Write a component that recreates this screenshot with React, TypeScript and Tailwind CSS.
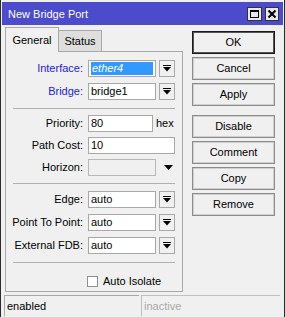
import React from "react";

const DropIcon = () => (
  <svg width="8" height="7" viewBox="0 0 8 7">
    <rect x="0" y="0" width="8" height="1" fill="#000" />
    <polygon points="0,2 8,2 4,6.5" fill="#000" />
  </svg>
);

const Field = ({
  label,
  value,
  blue,
  selected,
  width,
  drop,
  suffix,
  disabled,
}: {
  label: string;
  value?: string;
  blue?: boolean;
  selected?: boolean;
  width: number;
  drop?: boolean;
  suffix?: string;
  disabled?: boolean;
}) => (
  <div className="flex items-center h-[17px]">
    <div className={`w-[77px] text-right pr-0 ${blue ? "text-[#2222dd]" : "text-black"}`}>{label}</div>
    <div className="w-[5px]" />
    <div
      style={{ width }}
      className={`h-[17px] border flex items-center px-[2px] ${
        disabled ? "border-[#b8b8b8] bg-[#f0f0f0]" : "border-[#a8a8a8] bg-white"
      }`}
    >
      {selected ? (
        <div className="h-[13px] w-full bg-[#3399ff] text-white italic flex items-center leading-none pl-[1px]">{value}</div>
      ) : (
        <span className="leading-none">{value}</span>
      )}
    </div>
    {drop && (
      <div className="ml-[3px] w-[16px] h-[17px] border border-[#a8a8a8] bg-[#f0f0f0] flex items-center justify-center">
        <DropIcon />
      </div>
    )}
    {suffix && <span className="ml-[3px]">{suffix}</span>}
    {disabled && (
      <div className="ml-[8px] flex items-center">
        <svg width="9" height="5" viewBox="0 0 9 5">
          <polygon points="0,0 9,0 4.5,5" fill="#000" />
        </svg>
      </div>
    )}
  </div>
);

const Btn = ({ label, primary, className = "" }: { label: string; primary?: boolean; className?: string }) => (
  <div
    className={`h-[23px] w-[83px] flex items-center justify-center bg-[#f0f0f0] border ${
      primary ? "border-[#1a1a1a] shadow-[inset_0_0_0_1px_#555]" : "border-[#8c8c8c] shadow-[inset_0_0_0_1px_#cfcfcf]"
    } ${className}`}
  >
    {label}
  </div>
);

const Sep = () => <div className="mx-[7px] h-px bg-[#b0b0b0]" />;

export default function App() {
  return (
    <div className="w-[285px] h-[317px] bg-[#f0f0f0] border-x border-[#2a2a2a] flex flex-col text-[11px] text-black font-['Liberation_Sans',Arial,sans-serif] overflow-hidden">
      {/* Title bar */}
      <div className="mt-[2px] mx-[1px] h-[23px] bg-[#4b4bcb] flex items-center pl-[6px] pr-[4px] text-white">
        <span className="flex-1 pt-[1px] text-[11px]">New Bridge Port</span>
        <div className="flex gap-[3px] items-center">
          <svg width="15" height="14" viewBox="0 0 15 14">
            <rect x="0.5" y="0.5" width="14" height="13" fill="#e8e8e8" stroke="#333" />
            <rect x="3.5" y="3.5" width="8" height="7" fill="none" stroke="#000" />
            <rect x="3" y="3" width="9" height="2" fill="#000" />
          </svg>
          <svg width="14" height="14" viewBox="0 0 14 14">
            <rect x="0.5" y="0.5" width="13" height="13" fill="#e8e8e8" stroke="#333" />
            <path d="M3.5 3.5 L10.5 10.5 M10.5 3.5 L3.5 10.5" stroke="#000" strokeWidth="2" />
          </svg>
        </div>
      </div>

      {/* Body */}
      <div className="flex pl-[4px]">
        <div className="w-[178px] flex flex-col">
          <div className="h-[26px] flex items-end">
            <div className="h-[25px] w-[54px] border-t border-l border-r border-[#a8a8a8] bg-[#f0f0f0] -mb-px relative z-10 flex items-center justify-center">
              General
            </div>
            <div className="h-[21px] w-[43px] border-t border-r border-[#a8a8a8] bg-[#dedede] flex items-center justify-center">
              Status
            </div>
          </div>
          <div className="h-[241px] border border-[#a8a8a8] flex flex-col pt-[8px]">
            <div className="flex flex-col gap-[6px]">
              <Field label="Interface:" value="ether4" blue selected width={68} drop />
              <Field label="Bridge:" value="bridge1" blue width={68} drop />
            </div>
            <div className="mt-[8px] mb-[6px]">
              <Sep />
            </div>
            <div className="flex flex-col gap-[5px]">
              <Field label="Priority:" value="80" width={65} suffix="hex" />
              <Field label="Path Cost:" value="10" width={87} />
              <Field label="Horizon:" value="" width={68} disabled />
            </div>
            <div className="mt-[7px] mb-[7px]">
              <Sep />
            </div>
            <div className="flex flex-col gap-[6px]">
              <Field label="Edge:" value="auto" width={68} drop />
              <Field label="Point To Point:" value="auto" width={68} drop />
              <Field label="External FDB:" value="auto" width={68} drop />
            </div>
            <div className="mt-[8px]">
              <Sep />
            </div>
            <div className="mt-[10px] flex items-center pl-[81px]">
              <div className="w-[11px] h-[11px] border border-[#8f8f8f] bg-white" />
              <span className="ml-[5px]">Auto Isolate</span>
            </div>
          </div>
        </div>
        <div className="ml-[9px] pt-[6px] flex flex-col gap-[3px]">
          <Btn label="OK" primary />
          <Btn label="Cancel" />
          <Btn label="Apply" />
          <Btn label="Disable" className="mt-[6px]" />
          <Btn label="Comment" />
          <Btn label="Copy" />
          <Btn label="Remove" />
        </div>
      </div>

      {/* Status bar */}
      <div className="mt-[3px] h-[21px] flex pl-[3px] gap-[2px]">
        <div className="w-[135px] h-full border-t border-l border-[#a8a8a8] flex items-center pl-[2px]">enabled</div>
        <div className="w-[139px] h-full border-t border-l border-[#c0c0c0] flex items-center pl-[2px] text-[#a8a8a8]">
          inactive
        </div>
      </div>
    </div>
  );
}
